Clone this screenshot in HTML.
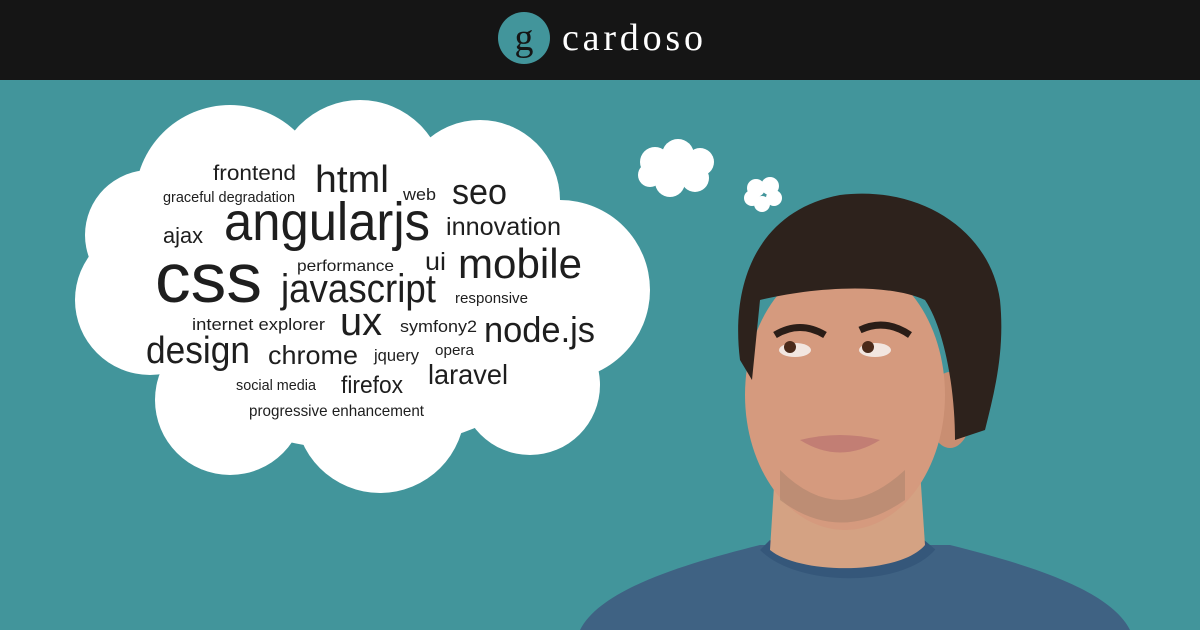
<!DOCTYPE html>
<html><head><meta charset="utf-8"><style>
html,body{margin:0;padding:0;width:1200px;height:630px;overflow:hidden;background:#42959b}
svg{display:block}
</style></head><body>
<svg width="1200" height="630" viewBox="0 0 1200 630" xmlns="http://www.w3.org/2000/svg">
<rect width="1200" height="630" fill="#42959b"/>
<rect width="1200" height="80" fill="#151515"/>
<circle cx="524" cy="38" r="26" fill="#42959b"/>
<text x="524" y="50" text-anchor="middle" font-family="Liberation Serif, serif" font-size="38" fill="#151515">g</text>
<text x="562" y="50" font-family="Liberation Serif, serif" font-size="38" fill="#fff" textLength="141" lengthAdjust="spacing">cardoso</text>

<g fill="#fff">
<circle cx="230" cy="200" r="95"/><circle cx="360" cy="185" r="85"/><circle cx="480" cy="200" r="80"/>
<circle cx="560" cy="290" r="90"/><circle cx="530" cy="385" r="70"/><circle cx="380" cy="408" r="85"/>
<circle cx="230" cy="400" r="75"/><circle cx="150" cy="300" r="75"/><circle cx="150" cy="235" r="65"/>
<ellipse cx="360" cy="300" rx="220" ry="150"/>
<circle cx="655" cy="162" r="15"/><circle cx="678" cy="155" r="16"/><circle cx="700" cy="162" r="14"/>
<circle cx="695" cy="178" r="14"/><circle cx="670" cy="182" r="15"/><circle cx="650" cy="175" r="12"/><ellipse cx="675" cy="168" rx="22" ry="15"/>
<circle cx="756" cy="188" r="9"/><circle cx="770" cy="186" r="9"/><circle cx="774" cy="198" r="8"/><circle cx="762" cy="204" r="8"/><circle cx="752" cy="198" r="8"/>
</g>

<g font-family="Liberation Sans, sans-serif" fill="#1e1e1e" lengthAdjust="spacingAndGlyphs">
<text x="213" y="180" font-size="21" textLength="83" lengthAdjust="spacingAndGlyphs">frontend</text>
<text x="315" y="192" font-size="38" textLength="74" lengthAdjust="spacingAndGlyphs">html</text>
<text x="403" y="200" font-size="17" textLength="33" lengthAdjust="spacingAndGlyphs">web</text>
<text x="452" y="204" font-size="36" textLength="55" lengthAdjust="spacingAndGlyphs">seo</text>
<text x="163" y="202" font-size="15" textLength="132" lengthAdjust="spacingAndGlyphs">graceful degradation</text>
<text x="224" y="240" font-size="54" textLength="206" lengthAdjust="spacingAndGlyphs">angularjs</text>
<text x="446" y="235" font-size="25" textLength="115" lengthAdjust="spacingAndGlyphs">innovation</text>
<text x="163" y="243" font-size="22" textLength="40" lengthAdjust="spacingAndGlyphs">ajax</text>
<text x="155" y="302" font-size="70" textLength="107" lengthAdjust="spacingAndGlyphs">css</text>
<text x="297" y="271" font-size="16" textLength="97" lengthAdjust="spacingAndGlyphs">performance</text>
<text x="425" y="270" font-size="25" textLength="21" lengthAdjust="spacingAndGlyphs">ui</text>
<text x="458" y="278" font-size="42" textLength="124" lengthAdjust="spacingAndGlyphs">mobile</text>
<text x="281" y="302" font-size="40" textLength="155" lengthAdjust="spacingAndGlyphs">javascript</text>
<text x="455" y="303" font-size="15" textLength="73" lengthAdjust="spacingAndGlyphs">responsive</text>
<text x="192" y="330" font-size="17" textLength="133" lengthAdjust="spacingAndGlyphs">internet explorer</text>
<text x="340" y="335" font-size="40" textLength="42" lengthAdjust="spacingAndGlyphs">ux</text>
<text x="400" y="332" font-size="17" textLength="77" lengthAdjust="spacingAndGlyphs">symfony2</text>
<text x="484" y="342" font-size="36" textLength="111" lengthAdjust="spacingAndGlyphs">node.js</text>
<text x="146" y="363" font-size="38" textLength="104" lengthAdjust="spacingAndGlyphs">design</text>
<text x="268" y="364" font-size="26" textLength="90" lengthAdjust="spacingAndGlyphs">chrome</text>
<text x="374" y="361" font-size="17" textLength="45" lengthAdjust="spacingAndGlyphs">jquery</text>
<text x="435" y="355" font-size="15" textLength="39" lengthAdjust="spacingAndGlyphs">opera</text>
<text x="428" y="384" font-size="28" textLength="80" lengthAdjust="spacingAndGlyphs">laravel</text>
<text x="236" y="390" font-size="15" textLength="80" lengthAdjust="spacingAndGlyphs">social media</text>
<text x="341" y="393" font-size="24" textLength="62" lengthAdjust="spacingAndGlyphs">firefox</text>
<text x="249" y="416" font-size="16" textLength="175" lengthAdjust="spacingAndGlyphs">progressive enhancement</text>
</g>

<!-- person -->
<path d="M580 630 C600 590 680 565 760 545 L950 545 C1030 565 1110 590 1130 630 Z" fill="#3f6283"/>
<path d="M765 545 C800 580 900 580 930 545" fill="none" stroke="#35577a" stroke-width="14"/>
<path d="M775 470 L770 550 C800 575 900 575 925 545 L920 470 Z" fill="#d4a283"/>
<ellipse cx="950" cy="410" rx="22" ry="38" fill="#c98e72"/>
<ellipse cx="845" cy="395" rx="100" ry="135" fill="#d59a7e"/>
<path d="M740 360 C730 280 760 210 840 195 C920 185 990 230 1000 300 C1005 350 995 390 985 430 L955 440 C955 390 945 330 925 300 C880 280 800 290 760 300 L752 380 Z" fill="#2d221c"/>
<path d="M775 335 Q800 320 825 335" stroke="#2a1d17" stroke-width="7" fill="none"/>
<path d="M860 330 Q885 318 910 335" stroke="#2a1d17" stroke-width="7" fill="none"/>
<ellipse cx="795" cy="350" rx="16" ry="7" fill="#f2e6e0"/><circle cx="790" cy="347" r="6" fill="#4a2a1a"/>
<ellipse cx="875" cy="350" rx="16" ry="7" fill="#f2e6e0"/><circle cx="868" cy="347" r="6" fill="#4a2a1a"/>
<path d="M800 440 Q840 430 880 440 Q840 465 800 440 Z" fill="#c27e74"/>
<path d="M780 470 Q840 530 905 470 L905 500 Q840 545 780 500 Z" fill="#a6806a" opacity="0.5"/>
</svg>
</body></html>
